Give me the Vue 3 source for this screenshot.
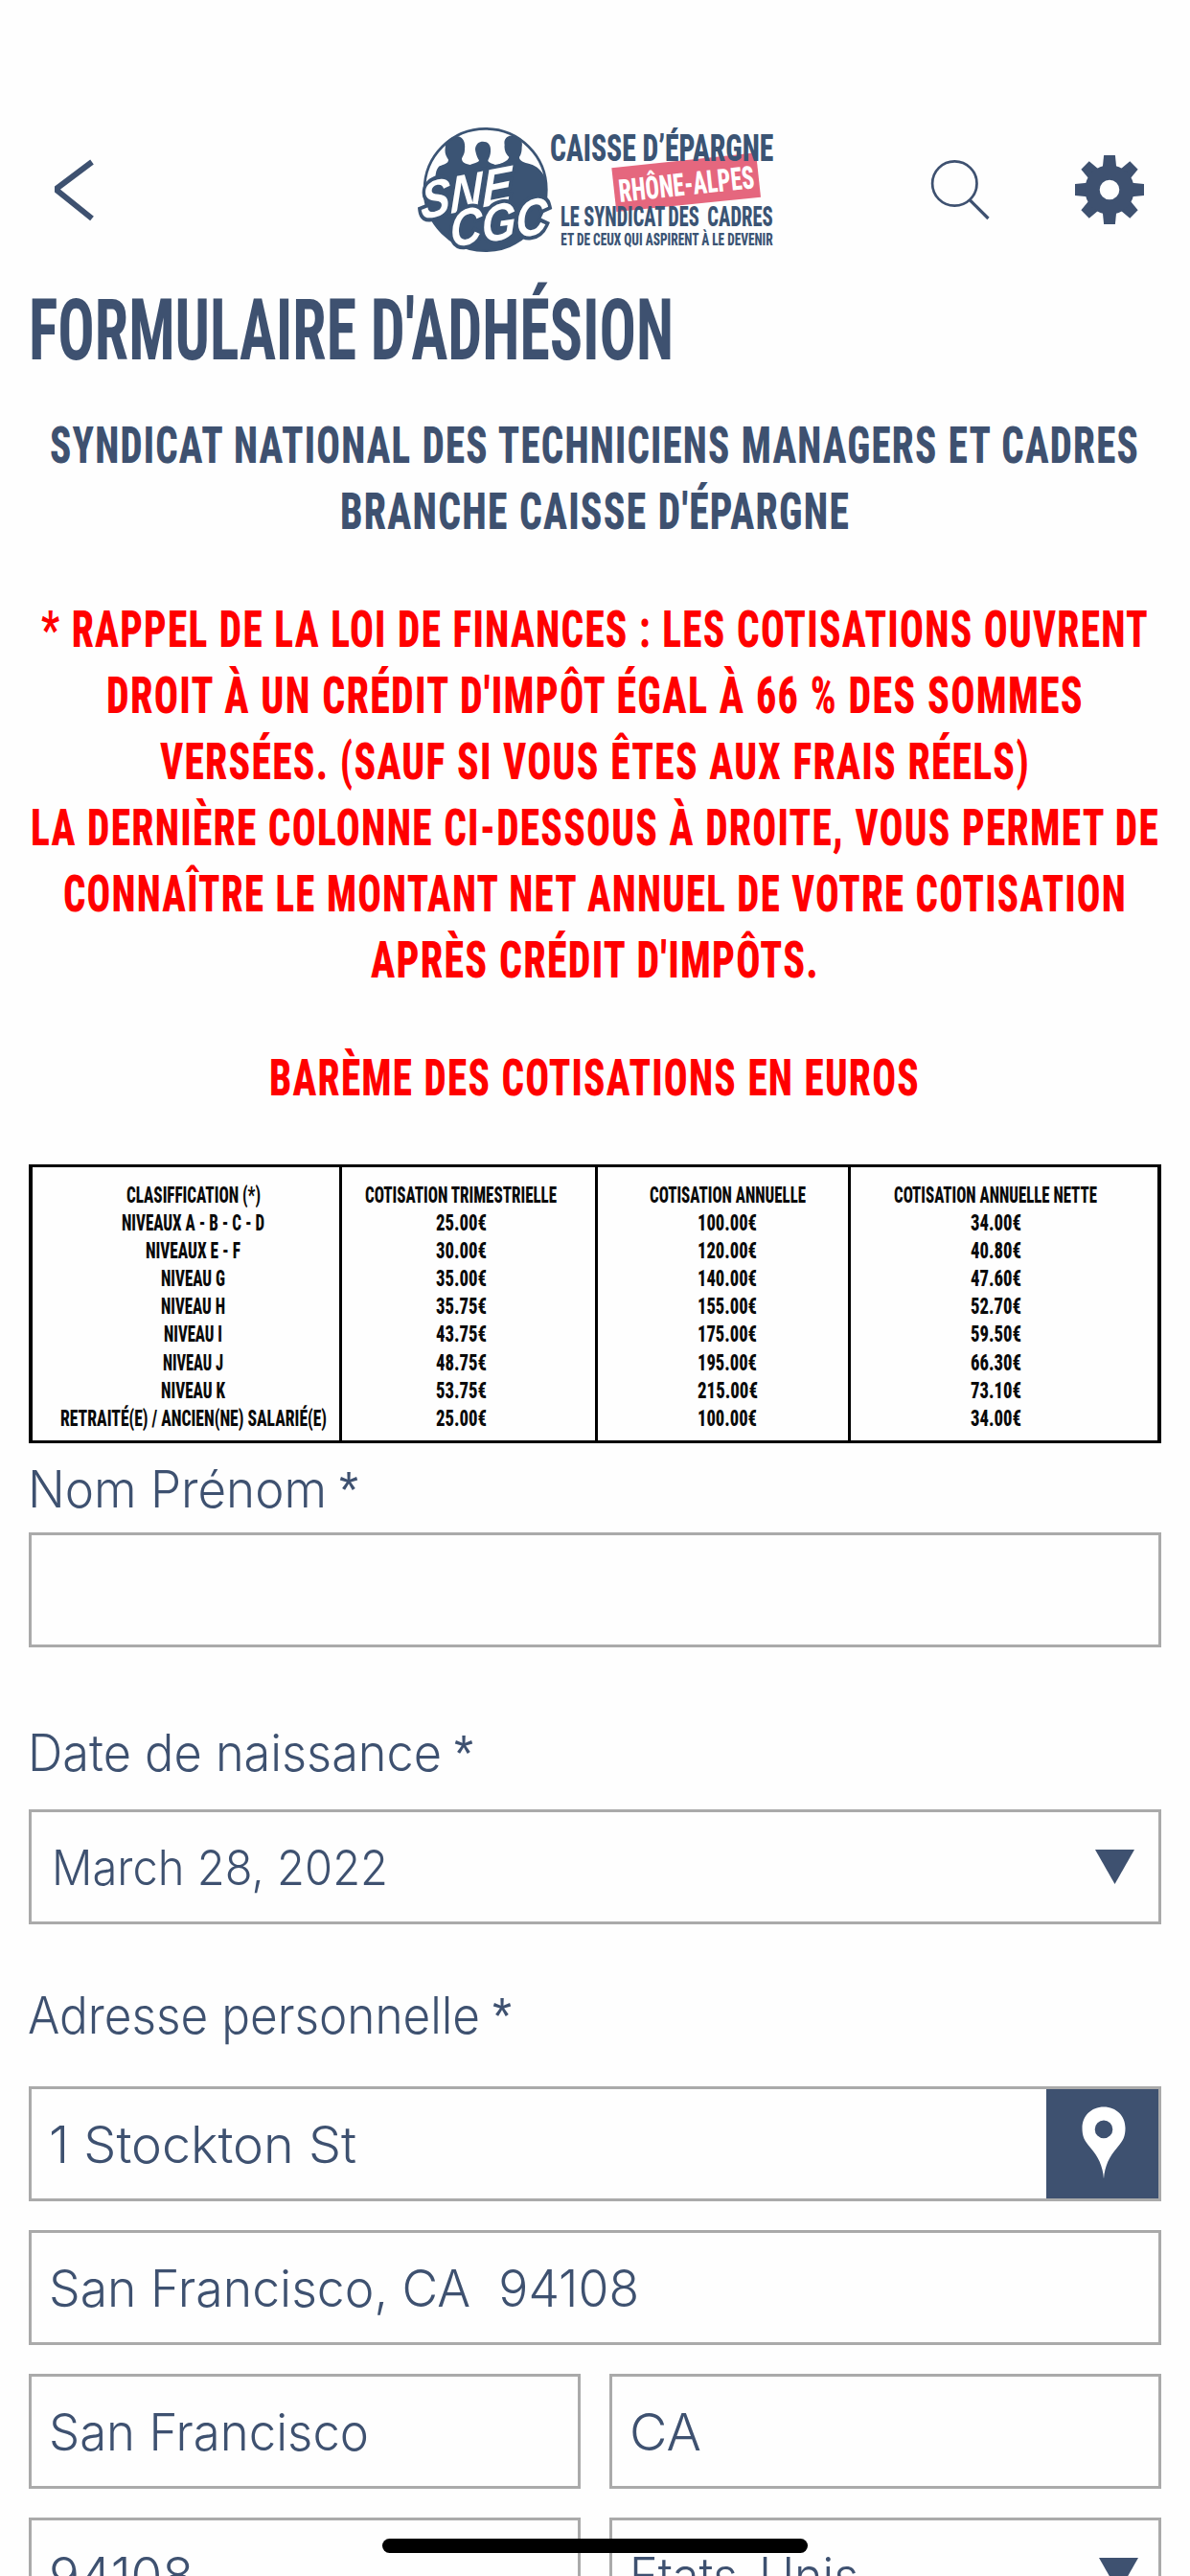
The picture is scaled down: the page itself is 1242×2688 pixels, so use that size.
<script setup>
import { h } from 'vue'

// One line of text fitted to an exact width.
const FitText = (props) =>
  h('svg', { width: props.w, height: props.h, overflow: 'visible' }, [
    h('text', {
      x: 0,
      y: props.b,
      textLength: props.w,
      lengthAdjust: 'spacingAndGlyphs',
      'font-size': props.s,
      fill: 'currentColor',
      style: 'white-space: pre',
    }, props.t),
  ])
FitText.props = ['t', 'w', 'h', 'b', 's']

const intro = [
  { t: 'SYNDICAT NATIONAL DES TECHNICIENS MANAGERS ET CADRES', w: 1137 },
  { t: "BRANCHE CAISSE D'ÉPARGNE", w: 532 },
]
const notice = [
  { t: '* RAPPEL DE LA LOI DE FINANCES : LES COTISATIONS OUVRENT', w: 1156 },
  { t: "DROIT À UN CRÉDIT D'IMPÔT ÉGAL À 66 % DES SOMMES", w: 1020 },
  { t: 'VERSÉES. (SAUF SI VOUS ÊTES AUX FRAIS RÉELS)', w: 908 },
  { t: 'LA DERNIÈRE COLONNE CI-DESSOUS À DROITE, VOUS PERMET DE', w: 1178 },
  { t: 'CONNAÎTRE LE MONTANT NET ANNUEL DE VOTRE COTISATION', w: 1110 },
  { t: "APRÈS CRÉDIT D'IMPÔTS.", w: 468 },
]
const columns = [
  {
    cls: 'c1',
    rows: [
      ['CLASIFFICATION (*)', 140], ['NIVEAUX A - B - C - D', 149], ['NIVEAUX E - F', 99],
      ['NIVEAU G', 67], ['NIVEAU H', 67], ['NIVEAU I', 61], ['NIVEAU J', 63], ['NIVEAU K', 67],
      ['RETRAITÉ(E) / ANCIEN(NE) SALARIÉ(E)', 278],
    ],
  },
  {
    cls: 'c2',
    rows: [
      ['COTISATION TRIMESTRIELLE', 200], ['25.00€', 53], ['30.00€', 53], ['35.00€', 53], ['35.75€', 53],
      ['43.75€', 53], ['48.75€', 53], ['53.75€', 53], ['25.00€', 53],
    ],
  },
  {
    cls: 'c3',
    rows: [
      ['COTISATION ANNUELLE', 163], ['100.00€', 62], ['120.00€', 62], ['140.00€', 62], ['155.00€', 62],
      ['175.00€', 62], ['195.00€', 62], ['215.00€', 63], ['100.00€', 62],
    ],
  },
  {
    cls: 'c4',
    rows: [
      ['COTISATION ANNUELLE NETTE', 212], ['34.00€', 53], ['40.80€', 53], ['47.60€', 53], ['52.70€', 53],
      ['59.50€', 53], ['66.30€', 53], ['73.10€', 53], ['34.00€', 53],
    ],
  },
]
const teeth = [0, 45, 90, 135, 180, 225, 270, 315]
</script>

<template>
  <div class="screen">
    <header class="bar">
      <svg class="back" width="48" height="72" viewBox="0 0 48 72">
        <path d="M43 7 L7 34 V37 L43 66" fill="none" stroke="#3e5170" stroke-width="6" />
      </svg>
      <svg class="logo" width="400" height="150" viewBox="0 0 1200 450" overflow="visible">
        <defs>
          <clipPath id="disc"><circle cx="260" cy="232" r="193" /></clipPath>
        </defs>
        <g clip-path="url(#disc)" fill="#3b5474">
          <path d="M134 105 C134 78 150 66 168 66 C188 66 198 82 195 106 C196 120 190 128 186 136 C186 150 196 152 212 156 C226 150 238 150 240 142 C232 130 228 112 228 106 C230 90 240 83 252 83 C268 83 277 94 276 110 C277 124 272 134 268 142 C268 150 282 152 296 158 C310 150 330 146 334 132 C322 122 318 106 320 94 C316 76 328 64 346 64 C366 64 378 78 374 100 C374 114 372 124 366 132 C366 144 380 148 400 154 C420 160 436 172 448 200 L470 300 L440 450 L80 450 L60 230 L102 230 C102 190 104 170 116 160 C130 154 144 152 144 140 C136 128 132 118 134 105 Z" />
        </g>
        <circle cx="260" cy="234" r="191" fill="none" stroke="#3b5474" stroke-width="8" />
        <g class="mono">
          <text transform="translate(58 327) rotate(-11) skewX(-11)" textLength="290" lengthAdjust="spacingAndGlyphs" font-size="162">SNE</text>
          <text transform="translate(150 413) rotate(-8) skewX(-8)" textLength="308" lengthAdjust="spacingAndGlyphs" font-size="162">CGC</text>
        </g>
        <path d="M655 166 L1107 118 L1122 257 L670 303 Z" fill="#e5677e" />
        <g class="display" fill="#3b5474">
          <text x="462" y="143" textLength="700" lengthAdjust="spacingAndGlyphs" font-size="117">CAISSE D’ÉPARGNE</text>
          <text x="495" y="348" textLength="328" lengthAdjust="spacingAndGlyphs" font-size="86">LE SYNDICAT</text>
          <text x="832" y="348" textLength="97" lengthAdjust="spacingAndGlyphs" font-size="86">DES</text>
          <text x="955" y="348" textLength="205" lengthAdjust="spacingAndGlyphs" font-size="86">CADRES</text>
          <text x="496" y="407" textLength="664" lengthAdjust="spacingAndGlyphs" font-size="55">ET DE CEUX QUI ASPIRENT À LE DEVENIR</text>
          <text transform="translate(681 273) rotate(-6)" textLength="426" lengthAdjust="spacingAndGlyphs" font-size="99" fill="#fff">RHÔNE-ALPES</text>
        </g>
      </svg>
      <svg class="search" width="70" height="70" viewBox="0 0 70 70">
        <g fill="none" stroke="#3e5170" stroke-width="2.7">
          <circle cx="31.3" cy="31.5" r="23.2" />
          <path d="M47 48.5 L66.5 68" stroke-width="3.2" />
        </g>
      </svg>
      <svg class="gear" width="72" height="72" viewBox="-36 -36 72 72">
        <g fill="#3e5170">
          <path v-for="a in teeth" :key="a" :transform="`rotate(${a})`" d="M-7.2 -23 L-5.9 -36 H5.9 L7.2 -23 Z" />
          <circle r="18" fill="none" stroke="#3e5170" stroke-width="15.4" />
        </g>
      </svg>
    </header>

    <h1 class="display title"><FitText t="FORMULAIRE D'ADHÉSION" w="673" h="100" b="65" s="88.5" /></h1>

    <section class="display spaced">
      <FitText v-for="l in intro" :key="l.t" :t="l.t" :w="l.w" h="69" b="53" s="53.5" />
      <div class="red">
        <FitText v-for="l in notice" :key="l.t" :t="l.t" :w="l.w" h="69" b="53" s="53.5" />
        <FitText class="scale" t="BARÈME DES COTISATIONS EN EUROS" w="679" h="69" b="53" s="53.5" />
      </div>
    </section>

    <section class="display rates">
      <div v-for="c in columns" :key="c.cls" class="col" :class="c.cls">
        <FitText v-for="(r, i) in c.rows" :key="i" :t="r[0]" :w="r[1]" h="29.18" b="22" s="24.5" />
      </div>
    </section>

    <form class="form">
      <div class="label">
        <FitText t="Nom Prénom" w="312" h="93" b="67" s="53" />
        <FitText class="star" t="*" w="20" h="93" b="67" s="53" />
      </div>
      <div class="field"></div>

      <div class="label">
        <FitText t="Date de naissance" w="432" h="169" b="128.5" s="53" />
        <FitText class="star" t="*" w="20" h="169" b="128.5" s="53" />
      </div>
      <div class="field date">
        <FitText t="March 28, 2022" w="351" h="60" b="48.5" s="51" />
        <svg class="tri" width="41" height="36" viewBox="0 0 41 36"><path d="M0 0 H41 L20.5 36 Z" fill="#3e5170" /></svg>
      </div>

      <div class="label">
        <FitText t="Adresse personnelle" w="472" h="169" b="113.5" s="53" />
        <FitText class="star" t="*" w="20" h="169" b="113.5" s="53" />
      </div>
      <div class="stack">
        <div class="field">
          <FitText t="1 Stockton St" w="321" h="60" b="50" s="53" />
          <div class="locate">
            <svg width="46" height="76" viewBox="0 0 46 76">
              <path fill-rule="evenodd" fill="#fff" d="M23 0.5 C36 0.5 45.5 10 45.5 22.5 C45.5 31 43.5 35.5 37 43 C29 52 24 62 23 75.5 C22 62 17 52 9 43 C2.5 35.5 0.5 31 0.5 22.5 C0.5 10 10 0.5 23 0.5 Z M23 14.6 A9.3 9.3 0 1 0 23 33.2 A9.3 9.3 0 1 0 23 14.6 Z" />
            </svg>
          </div>
        </div>
        <div class="field"><FitText t="San Francisco, CA  94108" w="616" h="60" b="50" s="53" /></div>
        <div class="pair">
          <div class="field"><FitText t="San Francisco" w="334" h="60" b="50" s="53" /></div>
          <div class="field"><FitText t="CA" w="75" h="60" b="50" s="53" /></div>
        </div>
        <div class="pair">
          <div class="field"><FitText t="94108" w="151" h="60" b="50" s="53" /></div>
          <div class="field country">
            <FitText t="États-Unis" w="239" h="60" b="50" s="53" />
            <svg class="tri" width="41" height="36" viewBox="0 0 41 36"><path d="M0 0 H41 L20.5 36 Z" fill="#3e5170" /></svg>
          </div>
        </div>
      </div>
    </form>
    <div class="home"></div>
  </div>
</template>

<style>
body { margin: 0; background: #fefefe; }
</style>

<style scoped>
.screen { position: relative; width: 1242px; height: 2688px; overflow: hidden; box-sizing: border-box; padding: 120px 30px 0; background: #fefefe; color: #3e5170; }
svg { display: block; flex: none; }
.bar { display: flex; height: 150px; }
.back { margin: 42px 0 0 23px; }
.logo { margin-left: 319px; }
.search { margin: 40px 0 0 145px; }
.gear { margin: 42px 0 0 87px; }
.display { font-family: Roboto, "Liberation Sans", sans-serif; font-weight: 800; font-stretch: 75%; }
.mono { font-family: "Liberation Sans", sans-serif; font-weight: bold; font-style: italic; fill: #fff; stroke: #3b5474; stroke-width: 24px; paint-order: stroke; stroke-linejoin: miter; stroke-miterlimit: 2; }
.title { margin: 40px 0 20px; height: 100px; font-weight: 700; }
.spaced { display: flex; flex-direction: column; align-items: center; padding-right: 1px; letter-spacing: 0.1em; word-spacing: 0.05em; }
.red { display: flex; flex-direction: column; align-items: center; margin-top: 54px; color: #f00; }
.scale { margin-top: 54px; }
.rates { display: flex; height: 291px; box-sizing: border-box; margin-top: 56px; border: 3px solid #000; border-left-width: 4px; border-right-width: 4px; color: #0a0a0a; }
.col { display: flex; flex-direction: column; align-items: center; box-sizing: border-box; padding-top: 14.5px; border-right: 3px solid #000; }
.c1 { width: 323px; padding-left: 15px; }
.c2 { width: 267px; padding-right: 16px; }
.c3 { width: 264px; padding-left: 9px; }
.c4 { flex: 1; border-right: 0; padding-right: 18px; }
.form { font-family: Inter, "Liberation Sans", sans-serif; font-weight: 300; }
.label { display: flex; gap: 13px; margin-left: -1px; }
.star { font-family: "Liberation Sans", Arial, sans-serif; }
.field { display: flex; align-items: center; justify-content: space-between; box-sizing: border-box; height: 120px; padding-left: 18px; border: 3px solid #aaa; }
.date { padding-left: 21px; padding-right: 25px; }
.country { padding-right: 21px; }
.locate { display: flex; justify-content: center; width: 117px; height: 114px; background: #3e5170; padding-top: 18px; box-sizing: border-box; }
.locate svg { margin-left: 2px; }
.stack { display: flex; flex-direction: column; gap: 30px; }
.pair { display: grid; grid-template-columns: 1fr 1fr; gap: 30px; }
.home { position: absolute; left: 399px; top: 2649px; width: 444px; height: 15px; border-radius: 8px; background: #000; }
</style>
